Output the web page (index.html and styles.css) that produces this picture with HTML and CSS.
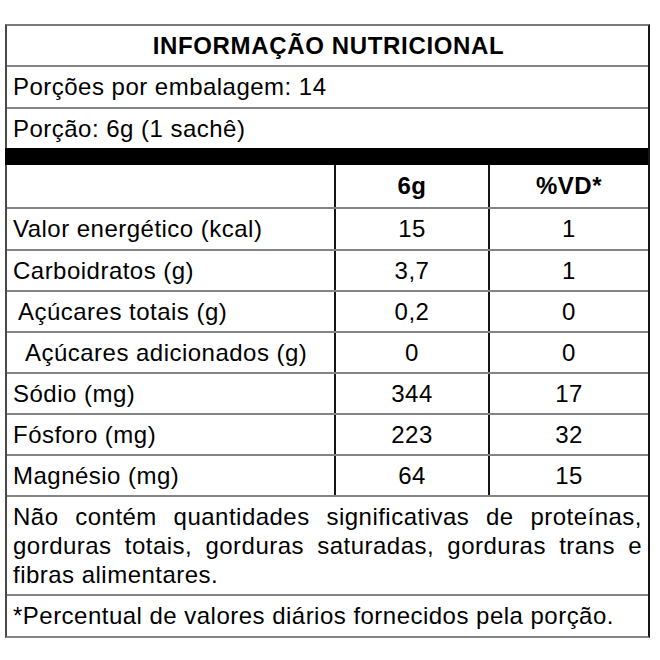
FILE: index.html
```html
<!DOCTYPE html>
<html lang="pt-BR">
<head>
<meta charset="utf-8">
<title>Informação Nutricional</title>
<link rel="stylesheet" href="styles.css">
</head>
<body>
<div class="label">
  <div class="row title-row">INFORMAÇÃO NUTRICIONAL</div>
  <div class="row info-row">Porções por embalagem: 14</div>
  <div class="row info-row portion">Porção: 6g (1 sachê)</div>
  <div class="bar"></div>
  <div class="row grid head-row">
    <div class="cell name"></div>
    <div class="cell val bold">6g</div>
    <div class="cell vd bold">%VD*</div>
  </div>
  <div class="row grid data first">
    <div class="cell name">Valor energético (kcal)</div>
    <div class="cell val">15</div>
    <div class="cell vd">1</div>
  </div>
  <div class="row grid data">
    <div class="cell name">Carboidratos (g)</div>
    <div class="cell val">3,7</div>
    <div class="cell vd">1</div>
  </div>
  <div class="row grid data">
    <div class="cell name indent1">Açúcares totais (g)</div>
    <div class="cell val">0,2</div>
    <div class="cell vd">0</div>
  </div>
  <div class="row grid data">
    <div class="cell name indent2">Açúcares adicionados (g)</div>
    <div class="cell val">0</div>
    <div class="cell vd">0</div>
  </div>
  <div class="row grid data">
    <div class="cell name">Sódio (mg)</div>
    <div class="cell val">344</div>
    <div class="cell vd">17</div>
  </div>
  <div class="row grid data">
    <div class="cell name">Fósforo (mg)</div>
    <div class="cell val">223</div>
    <div class="cell vd">32</div>
  </div>
  <div class="row grid data">
    <div class="cell name">Magnésio (mg)</div>
    <div class="cell val">64</div>
    <div class="cell vd">15</div>
  </div>
  <div class="row note">
    <div class="jline">Não contém quantidades significativas de proteínas,</div>
    <div class="jline">gorduras totais, gorduras saturadas, gorduras trans e</div>
    <div class="lline">fibras alimentares.</div>
  </div>
  <div class="row info-row last">*Percentual de valores diários fornecidos pela porção.</div>
</div>
</body>
</html>
```

FILE: styles.css
```css
html, body {
  margin: 0;
  padding: 0;
  background: #ffffff;
}

body {
  font-family: "Liberation Sans", Arial, sans-serif;
  color: #000;
  font-size: 24px;
  letter-spacing: 0.48px;
}

.label {
  box-sizing: border-box;
  width: 645px;
  margin: 24px 0 0 5px;
  border-left: 2px solid #4a4a4a;
  border-right: 2px solid #141414;
  border-top: 2px solid #7a7a7a;
  border-bottom: 2px solid #858585;
  display: flex;
  flex-direction: column;
}

.row {
  box-sizing: border-box;
  border-bottom: 2px solid #858585;
}

.title-row {
  height: 41px;
  display: flex;
  align-items: center;
  justify-content: center;
  font-weight: bold;
  letter-spacing: 0.65px;
  padding-top: 1px;
  padding-left: 2px;
}

.info-row {
  height: 42px;
  display: flex;
  align-items: center;
  padding-left: 6px;
}

.info-row.portion {
  height: 39px;
  border-bottom: none;
}

.info-row.last {
  height: 40px;
  border-bottom: none;
}

.bar {
  height: 17px;
  background: #000;
  margin-left: -2px;
}

.grid {
  display: grid;
  grid-template-columns: 329px 154px 158px;
}

.head-row {
  height: 44px;
}

.data {
  height: 41px;
}

.data.first {
  height: 42px;
}

.cell {
  display: flex;
  align-items: center;
}

.name {
  padding-left: 6px;
  border-right: 2px solid #151515;
}

.name.indent1 {
  padding-left: 11px;
}

.name.indent2 {
  padding-left: 18px;
}

.val {
  justify-content: center;
  border-right: 2px solid #151515;
}

.vd {
  justify-content: center;
}

.bold {
  font-weight: bold;
}

.note {
  height: 99px;
  padding: 5px 6px 0 6px;
  line-height: 29px;
}

.jline {
  text-align: justify;
  text-align-last: justify;
}

.lline {
  text-align: left;
}
```
